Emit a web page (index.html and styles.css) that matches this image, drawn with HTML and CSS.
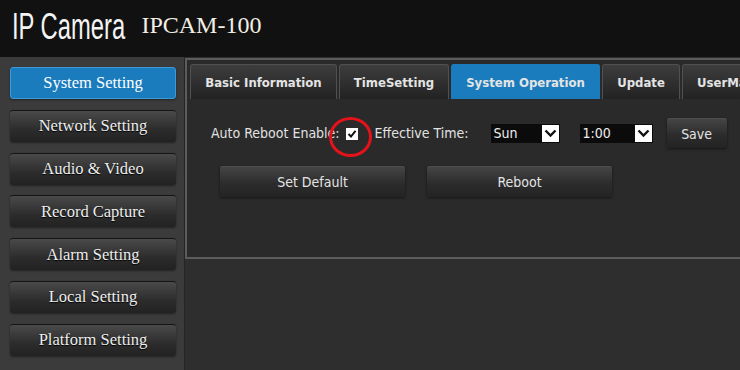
FILE: index.html
```html
<!DOCTYPE html>
<html lang="en">
<head>
    <meta charset="UTF-8">
    <meta name="viewport" content="width=device-width, initial-scale=1.0">
    <title>IP Camera</title>
    <link rel="stylesheet" href="styles.css">
</head>
<body>
    <header class="topbar">
        <span class="brand">IP Camera</span>
        <span class="model">IPCAM-100</span>
    </header>
    <div class="layout">
        <nav class="sidebar">
            <button class="side-btn active">System Setting</button>
            <button class="side-btn">Network Setting</button>
            <button class="side-btn">Audio &amp; Video</button>
            <button class="side-btn">Record Capture</button>
            <button class="side-btn">Alarm Setting</button>
            <button class="side-btn">Local Setting</button>
            <button class="side-btn">Platform Setting</button>
        </nav>
        <main class="content">
            <section class="panel">
                <div class="tabs">
                    <div class="tab tab-basic">Basic Information</div>
                    <div class="tab tab-time">TimeSetting</div>
                    <div class="tab tab-system active">System Operation</div>
                    <div class="tab tab-update">Update</div>
                    <div class="tab tab-user">UserManage</div>
                </div>
                <div class="form-row">
                    <span class="label">Auto Reboot Enable:</span>
                    <span class="check-wrap">
                        <span class="checkbox">
                            <svg width="10" height="10" viewBox="0 0 10 10"><path d="M1.5 5 L4 7.5 L8.5 1.8" fill="none" stroke="#111" stroke-width="2"/></svg>
                        </span>
                        <span class="highlight"></span>
                    </span>
                    <span class="label label-time">Effective Time:</span>
                    <div class="dropdown dropdown-day">
                        <span class="dropdown-value">Sun</span>
                        <span class="dropdown-arrow"><svg width="13" height="9" viewBox="0 0 13 9"><path d="M1.5 1.5 L6.5 6.5 L11.5 1.5" fill="none" stroke="#111" stroke-width="2.4"/></svg></span>
                    </div>
                    <div class="dropdown dropdown-hour">
                        <span class="dropdown-value">1:00</span>
                        <span class="dropdown-arrow"><svg width="13" height="9" viewBox="0 0 13 9"><path d="M1.5 1.5 L6.5 6.5 L11.5 1.5" fill="none" stroke="#111" stroke-width="2.4"/></svg></span>
                    </div>
                    <button class="btn btn-save">Save</button>
                </div>
                <div class="action-row">
                    <button class="btn btn-wide">Set Default</button>
                    <button class="btn btn-wide">Reboot</button>
                </div>
            </section>
        </main>
    </div>
</body>
</html>
```
FILE: styles.css
```css
body {
    margin: 0;
    width: 740px;
    height: 370px;
    overflow: hidden;
    background-color: #2e2e2e;
    font-family: "DejaVu Sans Condensed", "DejaVu Sans", sans-serif;
    font-stretch: condensed;
    color: #ddd;
}

.topbar {
    height: 57px;
    background-color: #111;
    display: flex;
    align-items: center;
    padding-left: 12px;
}

.brand {
    display: inline-block;
    font-family: "Liberation Sans", sans-serif;
    font-size: 36px;
    color: #f4f4f4;
    transform: scaleX(0.66);
    transform-origin: left center;
    margin-right: -42px;
    margin-top: -3px;
}

.model {
    font-family: "Liberation Serif", serif;
    font-size: 24px;
    color: #f3efe4;
    margin-top: -6px;
}

.layout {
    display: flex;
    height: 313px;
}

.sidebar {
    width: 184px;
    flex-shrink: 0;
    box-sizing: border-box;
    background-color: #3b3b3b;
    padding: 10px 0 0 10px;
    display: flex;
    flex-direction: column;
    gap: 10.75px;
}

.side-btn {
    width: 166px;
    height: 32px;
    border: none;
    border-top: 1px solid #151515;
    border-radius: 3px;
    background: linear-gradient(#4a4a4a, #2c2c2c 60%, #222);
    box-shadow: 0 1px 2px rgba(0, 0, 0, 0.4);
    font-family: "Liberation Serif", serif;
    font-size: 16.5px;
    color: #eee;
    text-shadow: 0 1px 1px #000;
    padding: 0;
}

.side-btn.active {
    background: #1a7cbd;
    border: 1px solid #3d9ad6;
    color: #fff;
    text-shadow: none;
}

.content {
    flex: 1;
    min-width: 0;
    overflow: hidden;
    border-left: 1px solid #252525;
    padding-top: 1px;
}

.panel {
    position: relative;
    height: 201px;
    box-sizing: border-box;
    background-color: #2a2a2a;
    border: 2px solid #5c5c5c;
    border-right: none;
    padding: 4px 0 0 3px;
}

.tabs {
    display: flex;
    gap: 2px;
    height: 35px;
    white-space: nowrap;
}

.tab {
    box-sizing: border-box;
    border: 1px solid #505050;
    border-bottom: none;
    border-radius: 3px 3px 0 0;
    background: linear-gradient(#3d3d3d, #222);
    display: flex;
    align-items: center;
    justify-content: center;
    font-weight: bold;
    font-size: 13px;
    color: #e4e4e4;
    flex-shrink: 0;
}

.tab.active {
    background: #1a7cbd;
    border-color: #1a7cbd;
}

.tab-basic { width: 147px; }
.tab-time { width: 110px; }
.tab-system { width: 149px; }
.tab-update { width: 78px; }
.tab-user { width: 100px; justify-content: flex-start; padding-left: 14px; }

.form-row {
    display: flex;
    align-items: center;
    margin: 19px 0 0 21px;
    height: 30px;
}

.label {
    font-size: 14px;
    color: #e2e2e2;
}

.check-wrap {
    position: relative;
    margin-left: 6px;
    margin-top: 2px;
}

.checkbox {
    display: block;
    width: 12px;
    height: 12px;
    background-color: #fff;
    box-sizing: border-box;
    padding: 1px;
}

.checkbox svg {
    display: block;
}

.highlight {
    position: absolute;
    left: -17px;
    top: -11px;
    width: 43px;
    height: 40px;
    box-sizing: border-box;
    border: 3.5px solid #e3121b;
    border-radius: 50%;
}

.label-time {
    margin-left: 17px;
}

.dropdown {
    display: flex;
    align-items: center;
    height: 19px;
    background-color: #0b0b0b;
    margin-left: 20px;
    box-sizing: border-box;
}

.dropdown-day { width: 69px; margin-left: 22px; }
.dropdown-hour { width: 73px; }

.dropdown-value {
    flex: 1;
    padding-left: 3px;
    font-size: 14px;
    color: #eee;
}

.dropdown-arrow {
    width: 17px;
    height: 17px;
    margin-right: 1px;
    background-color: #fff;
    display: flex;
    align-items: center;
    justify-content: center;
}

.btn {
    border: none;
    border-top: 1px solid #4c4c4c;
    border-radius: 2px;
    background: linear-gradient(#454545, #2c2c2c 55%, #232323);
    box-shadow: 0 1px 3px rgba(0, 0, 0, 0.5);
    font-family: "DejaVu Sans Condensed", "DejaVu Sans", sans-serif;
    font-stretch: condensed;
    font-size: 14px;
    color: #e4e4e4;
    padding: 0;
}

.btn-save {
    width: 60px;
    height: 30px;
    margin-left: 14px;
}

.action-row {
    display: flex;
    gap: 22px;
    margin: 18px 0 0 30px;
}

.btn-wide {
    width: 185px;
    height: 31px;
}
```
